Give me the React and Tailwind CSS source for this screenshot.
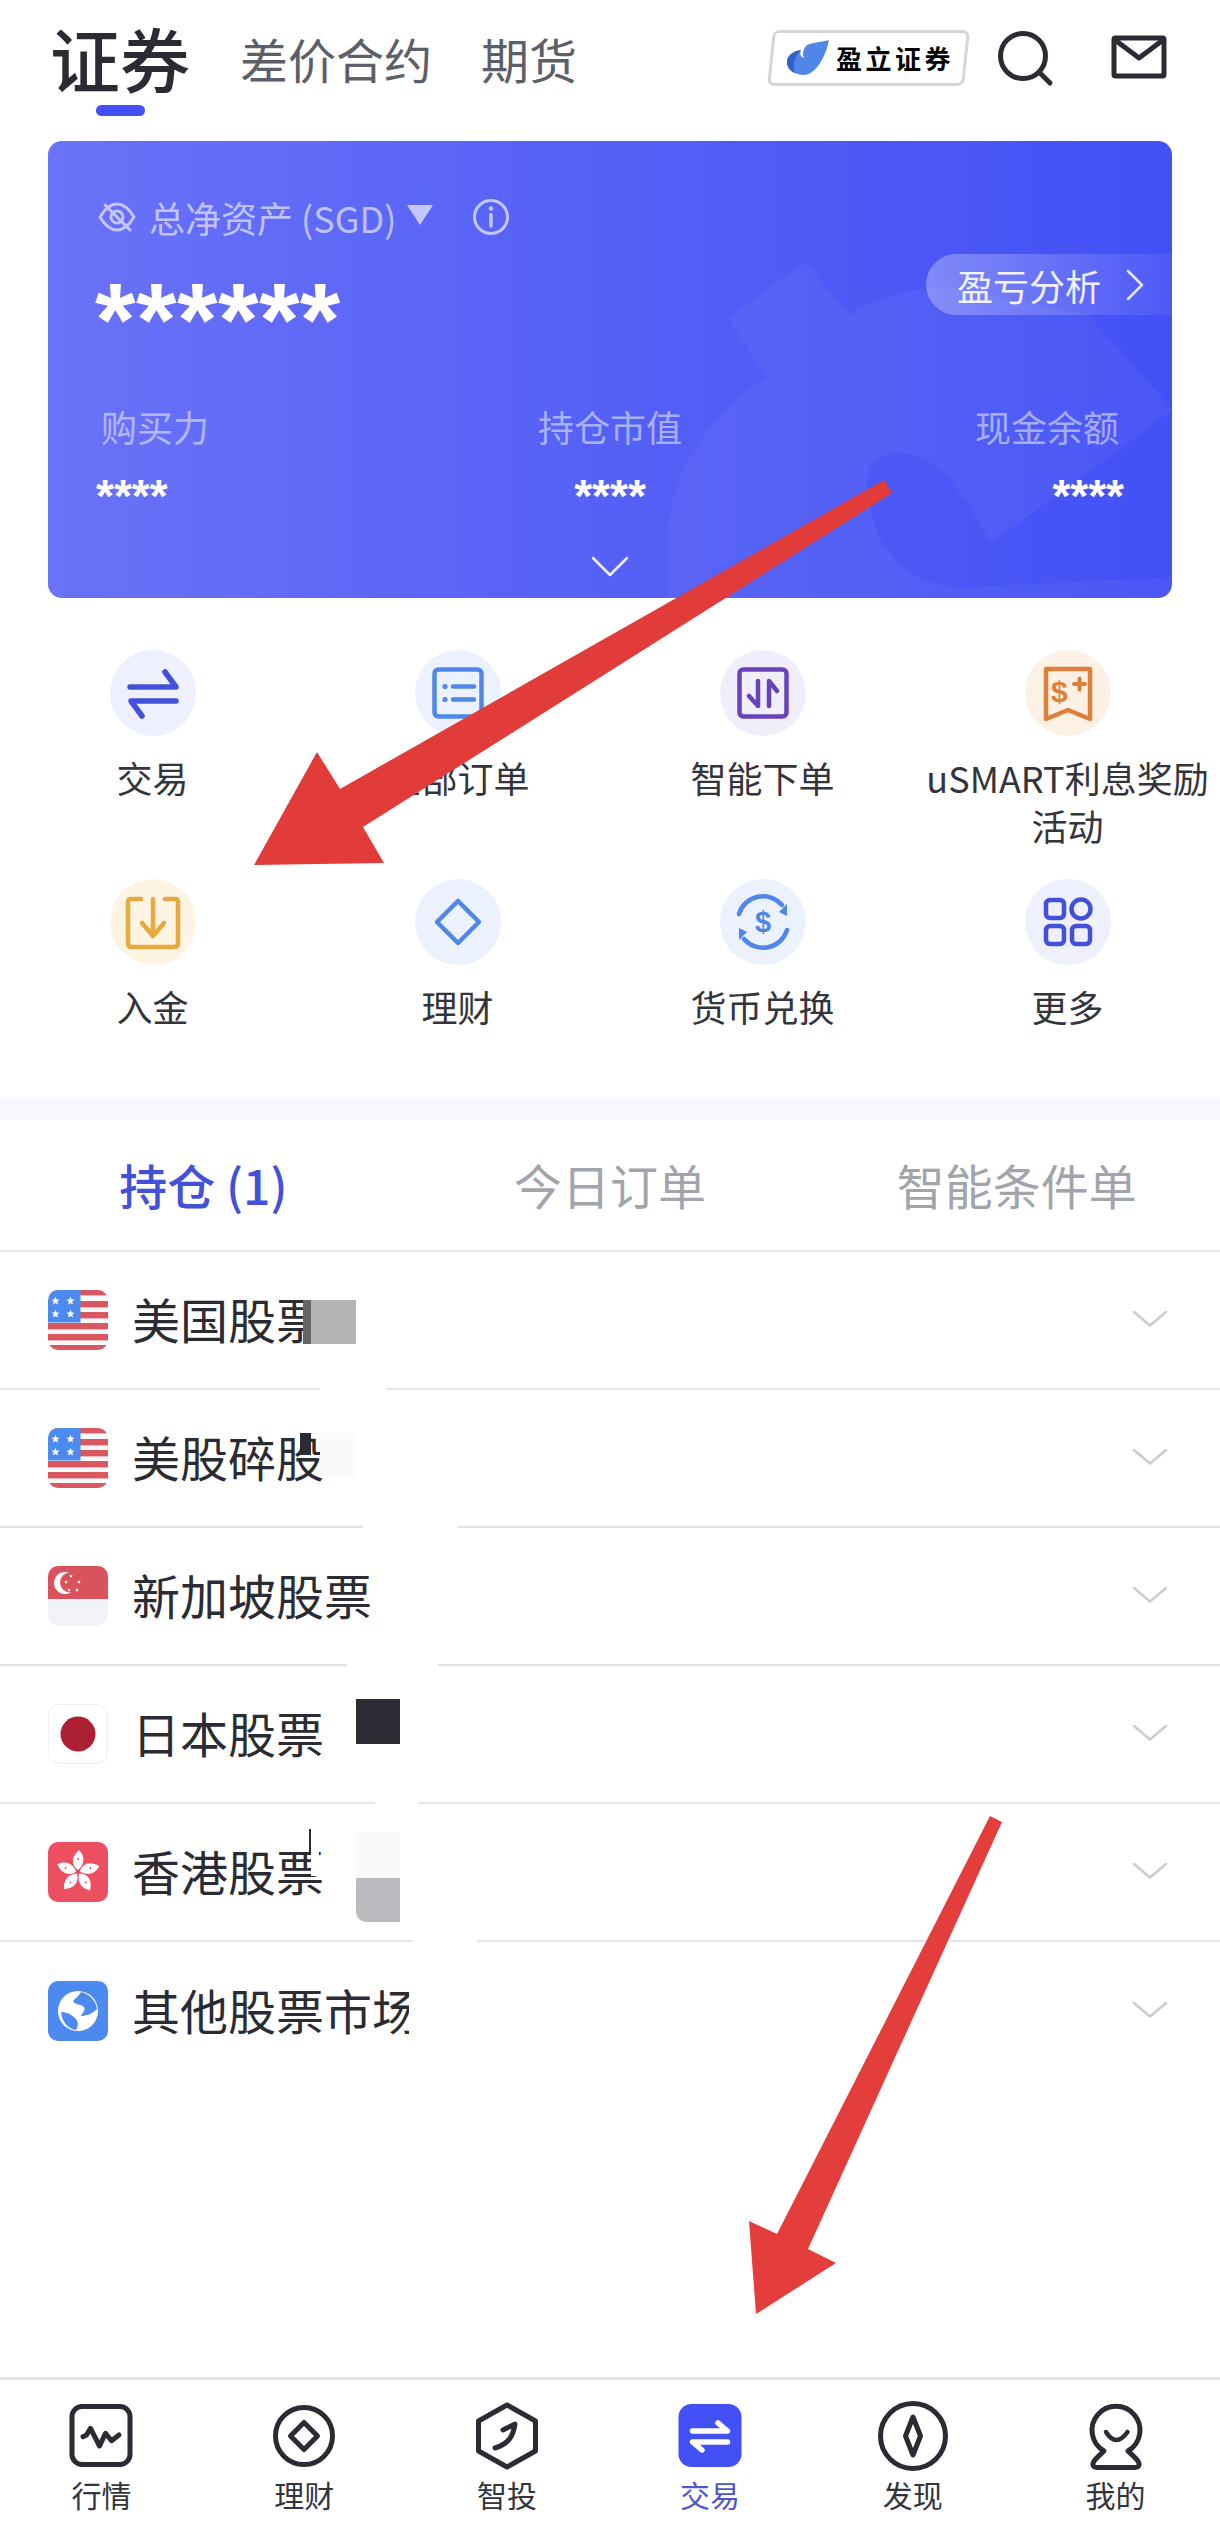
import React from "react";

const Svg = ({ size = 60, vb, children, className = "" }) => (
  <svg width={size} height={size} viewBox={vb || `0 0 ${size} ${size}`} fill="none" className={className}>
    {children}
  </svg>
);

const star = (cx, cy, r = 4.2, fill = "#fff") => {
  const pts = [];
  for (let i = 0; i < 10; i++) {
    const rad = i % 2 === 0 ? r : r * 0.45;
    const a = -Math.PI / 2 + (i * Math.PI) / 5;
    pts.push(`${cx + rad * Math.cos(a)},${cy + rad * Math.sin(a)}`);
  }
  return <polygon key={`${cx}-${cy}`} points={pts.join(" ")} fill={fill} />;
};

const FlagUS = () => (
  <Svg className="rounded-[10px] shrink-0">
    <rect width="60" height="60" fill="#f8f8fa" />
    {[-1, 11, 22, 33, 44, 55].map((y) => (
      <rect key={y} y={y} width="60" height="6.4" fill="#d9575f" />
    ))}
    <rect width="32.5" height="32.5" fill="#4d8af0" />
    {star(7.5, 11)}
    {star(22.5, 11)}
    {star(7.5, 24)}
    {star(22.5, 24)}
  </Svg>
);

const FlagSG = () => (
  <Svg className="rounded-[10px] shrink-0">
    <rect width="60" height="60" fill="#f1f3f7" />
    <rect width="60" height="33" fill="#d9535c" />
    <circle cx="17" cy="17" r="11" fill="#fff" />
    <circle cx="22" cy="16.5" r="10" fill="#d9535c" />
    {star(23, 10, 2)}
    {star(31, 16, 2)}
    {star(18, 16, 2)}
    {star(21, 24, 2)}
    {star(29, 24, 2)}
  </Svg>
);

const FlagJP = () => (
  <Svg className="shrink-0">
    <rect x="0.5" y="0.5" width="59" height="59" rx="10" fill="#fff" stroke="#efeff1" />
    <circle cx="30" cy="30" r="17.5" fill="#ad1f32" />
  </Svg>
);

const FlagHK = () => (
  <Svg className="rounded-[10px] shrink-0">
    <rect width="60" height="60" fill="#ec4f60" />
    {[0, 72, 144, 216, 288].map((r) => (
      <g key={r} transform={`rotate(${r} 30 30)`}>
        <path d="M30 28 C23 23 23 15 31 8 C37 14 37 22 30 28 Z" fill="#fff" />
        <circle cx="30" cy="17" r="1" fill="#ec4f60" />
      </g>
    ))}
  </Svg>
);

const FlagGlobe = () => (
  <Svg className="rounded-[10px] shrink-0">
    <rect width="60" height="60" fill="#4d8af0" />
    <circle cx="30" cy="30" r="20" fill="#fff" />
    <path d="M33 11 C31 15 27 17 25 20 C27 24 33 23 36 26 C38 29 34 32 33 35 C38 35 44 33 49 28 C48 20 42 13 33 11 Z" fill="#4d8af0" />
    <path d="M13 31 C18 31 23 33 27 37 C30 40 31 44 28 49 C20 48 14 41 13 31 Z" fill="#4d8af0" />
  </Svg>
);

const Chevron = () => (
  <svg width="36" height="18" viewBox="0 0 36 18" fill="none" className="shrink-0">
    <path d="M2 2 L18 15.5 L34 2" stroke="#cbccd0" strokeWidth="2.5" strokeLinecap="round" strokeLinejoin="round" />
  </svg>
);

const IconSwap = () => (
  <Svg>
    <path d="M7 24 H53 L42 9 M53 38 H8 L19 53" stroke="#4350d8" strokeWidth="5.5" strokeLinecap="round" strokeLinejoin="round" />
  </Svg>
);
const IconOrders = () => (
  <Svg>
    <rect x="6.5" y="6.5" width="47" height="47" rx="4" stroke="#4f86e8" strokeWidth="4.5" />
    <path d="M25 23.5 H46 M25 36.5 H46" stroke="#4f86e8" strokeWidth="4.5" strokeLinecap="round" />
    <circle cx="17" cy="23.5" r="2.6" fill="#4f86e8" />
    <circle cx="17" cy="36.5" r="2.6" fill="#4f86e8" />
  </Svg>
);
const IconSmart = () => (
  <Svg>
    <rect x="6.5" y="6.5" width="47" height="47" rx="4" stroke="#6a42b8" strokeWidth="4.5" />
    <path d="M25 18 V43 L16 33 M36 43 V18 L44 28" stroke="#6a42b8" strokeWidth="4.5" strokeLinecap="round" strokeLinejoin="round" />
  </Svg>
);
const IconInterest = () => (
  <Svg>
    <path d="M8 6 H52 V56 L30 47 L8 56 Z" stroke="#e08038" strokeWidth="4.5" strokeLinejoin="round" />
    <text x="13" y="39" fontSize="30" fontWeight="700" fontFamily="Liberation Sans" fill="#e08038">$</text>
    <path d="M36 21 H47 M41.5 15.5 V26.5" stroke="#e08038" strokeWidth="4" strokeLinecap="round" />
  </Svg>
);
const IconDeposit = () => (
  <Svg>
    <path d="M18 7 H8 Q5 7 5 10 V51 Q5 55 9 55 H51 Q55 55 55 51 V10 Q55 7 52 7 H42" stroke="#e8a93e" strokeWidth="4.5" strokeLinecap="round" />
    <path d="M30 7 V43 M19 31 L30 44 L41 31" stroke="#e8a93e" strokeWidth="4.5" strokeLinecap="round" strokeLinejoin="round" />
  </Svg>
);
const IconDiamond = () => (
  <Svg>
    <path d="M30 9 L51 30 L30 51 L9 30 Z" stroke="#4f86e8" strokeWidth="4.5" strokeLinejoin="round" />
  </Svg>
);
const IconExchange = () => (
  <Svg>
    <path d="M6 22 A25 25 0 0 1 49 13" stroke="#4f86e8" strokeWidth="4.5" strokeLinecap="round" />
    <path d="M46 20 L54 24 L54 12 Z" fill="#4f86e8" />
    <path d="M54 38 A25 25 0 0 1 11 47" stroke="#4f86e8" strokeWidth="4.5" strokeLinecap="round" />
    <path d="M14 40 L6 36 L6 48 Z" fill="#4f86e8" />
    <text x="30" y="40" textAnchor="middle" fontSize="29" fontWeight="700" fontFamily="Liberation Sans" fill="#4f86e8">$</text>
  </Svg>
);
const IconMore = () => (
  <Svg>
    <rect x="8" y="8" width="18" height="18" rx="4" stroke="#4350d8" strokeWidth="4.5" />
    <circle cx="43" cy="17" r="9.5" stroke="#4350d8" strokeWidth="4.5" />
    <rect x="8" y="34" width="18" height="18" rx="4" stroke="#4350d8" strokeWidth="4.5" />
    <rect x="34" y="34" width="18" height="18" rx="4" stroke="#4350d8" strokeWidth="4.5" />
  </Svg>
);

const actions = [
  { label: "交易", bg: "bg-[#eef0fd]", Icon: IconSwap },
  { label: "全部订单", bg: "bg-[#ebf2fd]", Icon: IconOrders },
  { label: "智能下单", bg: "bg-[#f1eefb]", Icon: IconSmart },
  { label: "uSMART利息奖励", line2: "活动", bg: "bg-[#fdf1e6]", Icon: IconInterest },
  { label: "入金", bg: "bg-[#fdf4e3]", Icon: IconDeposit },
  { label: "理财", bg: "bg-[#ebf2fd]", Icon: IconDiamond },
  { label: "货币兑换", bg: "bg-[#ebf2fd]", Icon: IconExchange },
  { label: "更多", bg: "bg-[#eef0fd]", Icon: IconMore },
];

const dark = "#2a2b33";

const NavMarket = () => (
  <Svg size={70}>
    <rect x="6" y="5.5" width="58" height="58" rx="10" stroke={dark} strokeWidth="5" />
    <path d="M17 35.7 L20.5 34 L24.5 27.3 L33.5 45 L39.5 32.3 L45.5 39.7 L53 34" stroke={dark} strokeWidth="5" strokeLinecap="round" strokeLinejoin="round" />
  </Svg>
);
const NavWealth = () => (
  <Svg size={70}>
    <circle cx="35" cy="35" r="28.5" stroke={dark} strokeWidth="5" />
    <path d="M35 21.5 L48.5 35 L35 48.5 L21.5 35 Z" stroke={dark} strokeWidth="5" strokeLinejoin="round" />
  </Svg>
);
const NavRobo = () => (
  <Svg size={70}>
    <path d="M35 4 L63.5 20 V50 L35 66 L6.5 50 V20 Z" stroke={dark} strokeWidth="5" strokeLinejoin="round" />
    <path d="M31 29 L43 23 C41 36 36 43 23 47" stroke={dark} strokeWidth="5" strokeLinecap="round" strokeLinejoin="round" />
  </Svg>
);
const NavTrade = () => (
  <Svg size={70}>
    <rect x="3.5" y="3" width="63" height="63" rx="13" fill="#4350f5" />
    <path d="M17.5 30 H52.5 L43 22 M52.5 41 H17.5 L27 49" stroke="#fff" strokeWidth="5.5" strokeLinecap="round" strokeLinejoin="round" />
  </Svg>
);
const NavDiscover = () => (
  <Svg size={70}>
    <circle cx="35" cy="35" r="32.5" stroke={dark} strokeWidth="5" />
    <path d="M35 16 L42.5 35 L35 54 L27.5 35 Z" stroke={dark} strokeWidth="5" strokeLinejoin="round" />
  </Svg>
);
const NavMe = () => (
  <Svg size={70}>
    <path d="M23 50 A24 24 0 1 1 47 50 C52 55 59 60 58 64 C57.5 66 56 66.5 54 66.5 H16 C14 66.5 12.5 66 12 64 C11 60 18 55 23 50 Z" stroke={dark} strokeWidth="5" strokeLinejoin="round" />
    <path d="M25 31 Q35 47 46.5 31" stroke={dark} strokeWidth="4.5" strokeLinecap="round" />
  </Svg>
);

const navItems = [
  { label: "行情", Icon: NavMarket },
  { label: "理财", Icon: NavWealth },
  { label: "智投", Icon: NavRobo },
  { label: "交易", Icon: NavTrade, active: true },
  { label: "发现", Icon: NavDiscover },
  { label: "我的", Icon: NavMe },
];

const Row = ({ Flag, text, textClass = "", last, children }) => (
  <div className={`relative h-[138px] flex items-center pl-12 pr-[52px] ${last ? "" : "border-b-2 border-[#e4e4e6]"}`}>
    <Flag />
    <div className={`ml-6 mb-[5px] text-[48px] leading-[60px] whitespace-nowrap text-[#2a2b33] ${textClass}`}>{text}</div>
    <div className="ml-auto mb-[2px]">
      <Chevron />
    </div>
    {children}
  </div>
);

const Stat = ({ label, className, labelClass = "" }) => (
  <div className={`flex flex-col ${className}`}>
    <span className={`text-[36px] leading-[50px] text-white/50 ${labelClass}`}>{label}</span>
    <span className="mt-[25px] text-[46px] leading-[40px] font-bold font-['Liberation_Sans',sans-serif]">****</span>
  </div>
);

export default function App() {
  return (
    <div className="relative w-[1220px] h-[2530px] bg-white overflow-hidden flex flex-col font-['Noto_Sans_CJK_SC','Noto_Sans',sans-serif]">
      {/* header */}
      <div className="h-[141px] shrink-0 flex items-start pl-[50px] pr-[53px] pt-[18px]">
        <div className="flex flex-col items-center">
          <div className="text-[70px] leading-[80px] font-medium text-[#2a2b33]">证券</div>
          <div className="mt-[7px] w-[49px] h-[11px] rounded-full bg-[#4350f5]" />
        </div>
        <div className="ml-[50px] text-[48px] leading-[80px] text-[#5c5e68]">差价合约</div>
        <div className="ml-[49px] text-[48px] leading-[80px] text-[#5c5e68]">期货</div>
        <div className="ml-auto flex items-start">
          <div className="mt-[12px] w-[197px] h-[56px] -skew-x-6 border-[3px] border-[#d4d5d6] rounded-[7px] flex items-center pl-[13px]">
            <svg width="44" height="36" viewBox="0 0 44 36" fill="none" className="skew-x-6 shrink-0">
              <path d="M43 0 C36 2 28 2 21 5 C17 9 16 14 18 18 C15 17 13 14 15 10 C8 11 1 15 1 22 C1 30 9 35 18 35 C26 35 38 24 43 0 Z" fill="#4f86e8" />
              <path d="M15 10 C8 11 1 15 1 22 C1 27 4 31 9 33 C7 27 6 20 15 10 Z" fill="#2f62c8" />
            </svg>
            <span className="skew-x-6 ml-[6px] text-[26px] leading-[30px] font-bold tracking-[3.5px] whitespace-nowrap text-black">盈立证券</span>
          </div>
          <svg width="58" height="58" viewBox="0 0 58 58" fill="none" className="ml-[30px] mt-[12px]">
            <circle cx="26" cy="26" r="22.5" stroke={dark} strokeWidth="5" />
            <path d="M43 43 L53 53" stroke={dark} strokeWidth="5" strokeLinecap="round" />
          </svg>
          <svg width="56" height="44" viewBox="0 0 56 44" fill="none" className="ml-[56px] mt-[17px]">
            <rect x="3" y="3" width="50" height="38" rx="1.5" stroke={dark} strokeWidth="5" strokeLinejoin="round" />
            <path d="M4 5 L28 23 L52 5" stroke={dark} strokeWidth="5" strokeLinejoin="round" />
          </svg>
        </div>
      </div>

      {/* asset card */}
      <div className="relative mx-12 h-[457px] shrink-0 rounded-[14px] overflow-hidden bg-gradient-to-r from-[#6a72f7] via-[#5560f6] to-[#4350f5] text-white">
        <svg className="absolute inset-0" width="1124" height="457" viewBox="0 0 1124 457" fill="none">
          <path d="M680 177 L757 121 L801 174 C840 150 878 146 900 146 L1040 174 L1125 269 L944 402 C920 370 900 312 851 312 C816 312 808 340 833 399 C850 430 880 446 920 446 L1124 436 L1124 457 L620 457 L620 400 C620 320 670 270 718 236 Z" fill="#fff" fillOpacity="0.045" />
        </svg>
        <div className="relative flex items-center pl-[50px] pt-[51px] h-[101px]">
          <svg width="38" height="38" viewBox="0 0 38 38" fill="none">
            <path d="M2 19 C8 9 14 6 19 6 C24 6 30 9 36 19 C30 29 24 32 19 32 C14 32 8 29 2 19 Z" stroke="#c3c7fb" strokeWidth="3" strokeLinejoin="round" />
            <circle cx="19" cy="19" r="6" stroke="#c3c7fb" strokeWidth="3" />
            <path d="M7 7 L32 32" stroke="#c3c7fb" strokeWidth="3" strokeLinecap="round" />
          </svg>
          <span className="ml-[13px] text-[36px] leading-[50px] text-white/60 whitespace-nowrap">总净资产 (SGD)</span>
          <svg width="28" height="22" viewBox="0 0 28 22" className="ml-[10px] mb-[4px]">
            <path d="M1 1 H27 L14 21 Z" fill="#c3c7fb" />
          </svg>
          <svg width="38" height="38" viewBox="0 0 38 38" fill="none" className="ml-[38px]">
            <circle cx="19" cy="19" r="16.5" stroke="#c3c7fb" strokeWidth="3" />
            <path d="M19 16.5 V28" stroke="#c3c7fb" strokeWidth="3.5" strokeLinecap="round" />
            <circle cx="19" cy="10.5" r="2.2" fill="#c3c7fb" />
          </svg>
        </div>
        <div className="relative pl-[47px] mt-[28px] text-[104px] leading-[100px] font-bold font-['Liberation_Sans',sans-serif] tracking-[0.5px]">******</div>
        <div className="absolute right-0 top-[113px] w-[246px] h-[61px] rounded-l-[31px] bg-gradient-to-r from-white/30 to-white/5 flex items-center pl-[31px]">
          <span className="text-[36px] leading-[50px] text-white/90 whitespace-nowrap">盈亏分析</span>
          <svg width="20" height="32" viewBox="0 0 20 32" fill="none" className="ml-[24px]">
            <path d="M3 2 L17 16 L3 30" stroke="#fff" strokeOpacity="0.85" strokeWidth="2.5" strokeLinecap="round" strokeLinejoin="round" />
          </svg>
        </div>
        <div className="relative grid grid-cols-3 px-[48px] mt-[31px]">
          <Stat label="购买力" className="items-start" labelClass="ml-[5px]" />
          <Stat label="持仓市值" className="items-center" />
          <Stat label="现金余额" className="items-end" labelClass="mr-[5px]" />
        </div>
        <div className="relative flex justify-center mt-[40px]">
          <svg width="38" height="22" viewBox="0 0 38 22" fill="none">
            <path d="M2 2 L19 19 L36 2" stroke="#fff" strokeOpacity="0.9" strokeWidth="2.5" strokeLinecap="round" strokeLinejoin="round" />
          </svg>
        </div>
      </div>

      {/* actions */}
      <div className="h-[499px] shrink-0 pt-[52px] grid grid-cols-4 auto-rows-[229px] text-[36px] leading-[48px] text-[#33343c]">
        {actions.map(({ label, line2, bg, Icon }) => (
          <div key={label} className="flex flex-col items-center">
            <div className={`w-[86px] h-[86px] rounded-full flex items-center justify-center ${bg}`}>
              <Icon />
            </div>
            <div className="mt-[17px] whitespace-nowrap text-center">
              {label}
              {line2 && <div>{line2}</div>}
            </div>
          </div>
        ))}
      </div>

      <div className="h-[23px] shrink-0 bg-[#f7f8fc]" />

      {/* tabs */}
      <div className="h-[132px] shrink-0 grid grid-cols-3 items-center text-center text-[48px] leading-[60px] border-b-2 border-[#e4e4e6] pb-[3px]">
        <div className="text-[#4350d8] font-medium">持仓 (1)</div>
        <div className="text-[#a2a4ac]">今日订单</div>
        <div className="text-[#a2a4ac]">智能条件单</div>
      </div>

      {/* market rows */}
      <Row Flag={FlagUS} text="美国股票">
        <div className="absolute left-[303px] top-[48px] w-[8px] h-[44px] bg-[#666668]" />
        <div className="absolute left-[311px] top-[48px] w-[45px] h-[44px] bg-[#b5b5b6]" />
        <div className="absolute left-[320px] -bottom-[2px] w-[66px] h-[3px] bg-white" />
      </Row>
      <Row Flag={FlagUS} text="美股碎股">
        <div className="absolute left-[300px] top-[43px] w-[11px] h-[22px] bg-[#2a2b33]" />
        <div className="absolute left-[320px] top-[43px] w-[36px] h-[44px] bg-[#fafafc]" />
        <div className="absolute left-[363px] -bottom-[2px] w-[94px] h-[3px] bg-white" />
      </Row>
      <Row Flag={FlagSG} text="新加坡股票">
        <div className="absolute left-[347px] -bottom-[2px] w-[91px] h-[3px] bg-white" />
      </Row>
      <Row Flag={FlagJP} text="日本股票">
        <div className="absolute left-[356px] top-[33px] w-[44px] h-[45px] bg-[#2a2b33]" />
        <div className="absolute left-[375px] -bottom-[2px] w-[43px] h-[3px] bg-white" />
      </Row>
      <Row Flag={FlagHK} text="香港股票">
        <div className="absolute left-[311px] top-[22px] w-[8px] h-[50px] bg-white" />
        <div className="absolute left-[309px] top-[25px] w-[2px] h-[24px] bg-[#2a2b33]" />
        <div className="absolute left-[356px] top-[29px] w-[44px] h-[45px] bg-[#f9f9f9]" />
        <div className="absolute left-[356px] top-[74px] w-[44px] h-[44px] rounded-bl-[10px] bg-[#bbbcc0]" />
        <div className="absolute left-[412px] -bottom-[2px] w-[65px] h-[3px] bg-white" />
      </Row>
      <Row Flag={FlagGlobe} text="其他股票市场" textClass="w-[277px] overflow-hidden" last />

      {/* bottom nav */}
      <div className="mt-auto h-[153px] shrink-0 border-t-[3px] border-[#e2e2e4] pt-[21px] pr-[3px] grid grid-cols-6">
        {navItems.map(({ label, Icon, active }) => (
          <div key={label} className="flex flex-col items-center">
            <Icon />
            <div className={`mt-[6px] text-[30px] leading-[34px] ${active ? "text-[#5157c8]" : "text-[#33343c]"}`}>{label}</div>
          </div>
        ))}
      </div>

      {/* annotation arrows */}
      <svg className="absolute inset-0 pointer-events-none" width="1220" height="2530" viewBox="0 0 1220 2530">
        <polygon points="884,480 892,493 363,827 384,863 254,865 317,752 340,789" fill="#e13b3a" />
        <polygon points="990,1816 1002,1822 808,2249 836,2263 756,2314 749,2221 777,2234" fill="#e33d3c" />
      </svg>
    </div>
  );
}
